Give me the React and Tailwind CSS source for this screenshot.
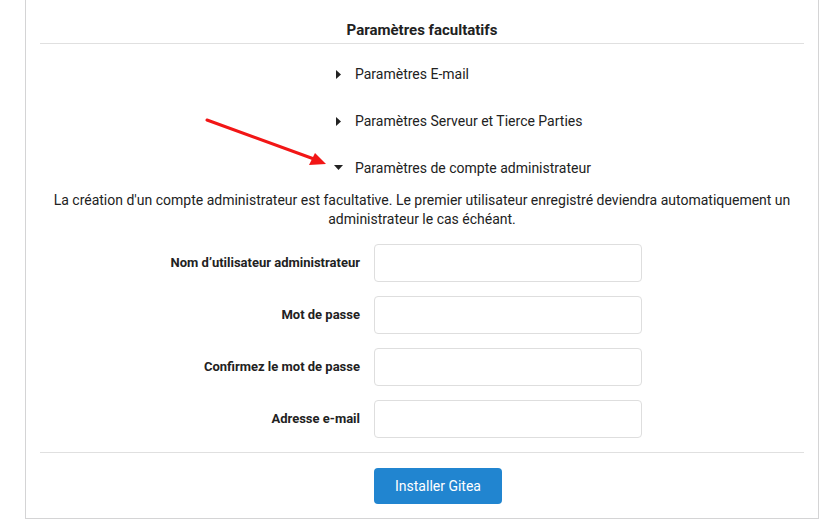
import React from 'react';

const font = { fontFamily: 'Roboto, "Liberation Sans", sans-serif' };

const Caret = ({ open }) =>
  open ? (
    <svg width="9" height="6" viewBox="0 0 9 6" className="mr-[12px]">
      <path d="M0 0 L9 0 L4.5 5 Z" fill="#222" />
    </svg>
  ) : (
    <svg width="6" height="9" viewBox="0 0 6 9" className="ml-[2px] mr-[13px]">
      <path d="M0 0 L5 4.5 L0 9 Z" fill="#222" />
    </svg>
  );

const Section = ({ label, open }) => (
  <div className="flex items-center h-[20px] pl-[294px] text-[14px] text-[#222]">
    <Caret open={open} />
    <span>{label}</span>
  </div>
);

const Field = ({ label }) => (
  <div className="flex items-center gap-[14px]">
    <label className="w-[320px] text-right text-[13px] font-bold text-[#222]">{label}</label>
    <input className="w-[268px] h-[38px] border border-[#dedede] rounded-[4px] bg-white" />
  </div>
);

export default function App() {
  return (
    <div className="relative w-[839px] h-[532px] bg-white" style={font}>
      <div className="ml-[25px] w-[794px] h-[519px] border-x border-b border-[#d4d4d5] px-[14px]">
        <h4 className="pt-[20px] pb-[3px] leading-[20px] text-center text-[15px] font-bold text-[#212121] border-b border-[#e0e0e0]">
          Paramètres facultatifs
        </h4>
        <div className="flex flex-col gap-[27px] pt-[20px]">
          <Section label="Paramètres E-mail" />
          <Section label="Paramètres Serveur et Tierce Parties" />
          <Section label="Paramètres de compte administrateur" open />
        </div>
        <p className="mt-[13px] text-center text-[14px] leading-[19px] text-[#222]">
          La création d'un compte administrateur est facultative. Le premier utilisateur enregistré deviendra automatiquement un
          <br />
          administrateur le cas échéant.
        </p>
        <div className="flex flex-col gap-[14px] mt-[15px]">
          <Field label="Nom d’utilisateur administrateur" />
          <Field label="Mot de passe" />
          <Field label="Confirmez le mot de passe" />
          <Field label="Adresse e-mail" />
        </div>
        <div className="mt-[14px] border-t border-[#e0e0e0] pt-[15px] pl-[334px]">
          <button className="w-[128px] h-[36px] rounded-[4px] bg-[#2185d0] text-white text-[14px]">
            Installer Gitea
          </button>
        </div>
      </div>
      <svg className="absolute left-0 top-0 pointer-events-none" width="839" height="532">
        <line x1="207" y1="120" x2="314" y2="159" stroke="#f21616" strokeWidth="3" strokeLinecap="round" />
        <path d="M326 164 L309 165 L315 153 Z" fill="#f21616" />
      </svg>
    </div>
  );
}
